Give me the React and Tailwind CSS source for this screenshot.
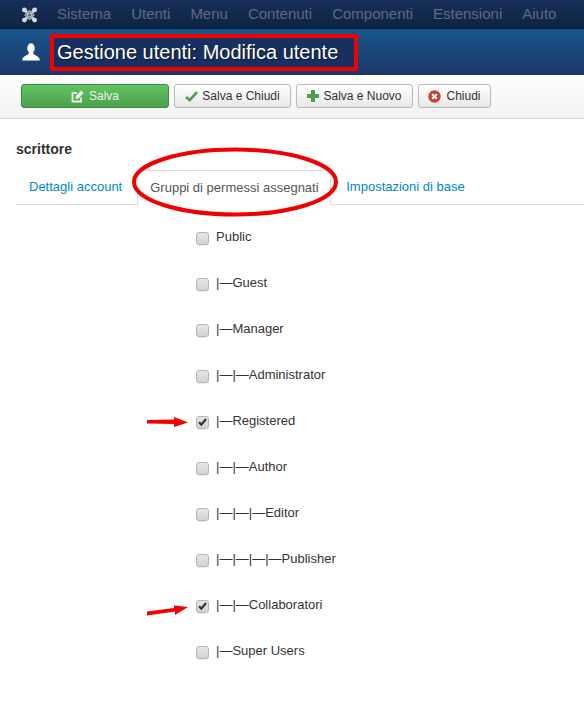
import React from "react";

const font = { fontFamily: '"Liberation Sans", Arial, sans-serif' };
const menu = ["Sistema", "Utenti", "Menu", "Contenuti", "Componenti", "Estensioni", "Aiuto"];
const groups = [
  { label: "Public" },
  { label: "|—Guest" },
  { label: "|—Manager" },
  { label: "|—|—Administrator" },
  { label: "|—Registered", checked: true, arrow: "a" },
  { label: "|—|—Author" },
  { label: "|—|—|—Editor" },
  { label: "|—|—|—|—Publisher" },
  { label: "|—|—Collaboratori", checked: true, arrow: "b" },
  { label: "|—Super Users" },
];

function Joomla() {
  return (
    <svg width="17" height="18" viewBox="0 0 18 18" fill="none" stroke="#d3d8df" strokeLinecap="round">
      <path d="M4 4 L14 14 M14 4 L4 14" strokeWidth="3" />
      <path d="M9 4.5 L13.5 9 L9 13.5 L4.5 9 Z" strokeWidth="1.8" stroke="#9aa5b5" />
      <circle cx="3.6" cy="3.6" r="2.6" fill="#d3d8df" stroke="none" />
      <circle cx="14.4" cy="3.6" r="2.6" fill="#d3d8df" stroke="none" />
      <circle cx="3.6" cy="14.4" r="2.6" fill="#d3d8df" stroke="none" />
      <circle cx="14.4" cy="14.4" r="2.6" fill="#d3d8df" stroke="none" />
      <circle cx="9" cy="9" r="1.6" fill="#5b6a80" stroke="none" />
    </svg>
  );
}

function UserIcon() {
  return (
    <svg width="18" height="18" viewBox="0 0 18 18" fill="#fff">
      <ellipse cx="9" cy="5.3" rx="3.7" ry="5" />
      <path d="M7 9 C7 12.2 2.5 12.6 0.6 15.2 L0.2 17.6 L17.8 17.6 L17.4 15.2 C15.5 12.6 11 12.2 11 9 Z" />
    </svg>
  );
}

function Btn({ icon, label, className }) {
  return (
    <button className={`h-6 flex items-center justify-center gap-1 rounded-[3px] border text-[12px] leading-none ${className}`}>
      {icon}
      <span>{label}</span>
    </button>
  );
}

function Arrow({ kind }) {
  const points = kind === "a"
    ? "0,3 27,2.5 27,0 41,5.5 27,10 27,7 0,6.5"
    : "0,8.5 27,5 27,2.5 41,4 28,12 28,8.5 0,12.5";
  return (
    <svg className={`absolute left-[147px] ${kind === "a" ? "top-[19px]" : "top-[21px]"}`} width="42" height="13" viewBox="0 0 42 13">
      <polygon points={points} fill="#f40000" />
    </svg>
  );
}

export default function App() {
  return (
    <div className="relative min-h-[701px] w-[584px] overflow-hidden bg-white" style={font}>
      <nav className="flex h-[29px] items-center bg-gradient-to-b from-[#17305a] to-[#0f2240] pl-[21px] text-[15px] text-[#5d6b80]">
        <Joomla />
        <div className="ml-[19px] flex gap-[20px]">
          {menu.map((m) => <span key={m}>{m}</span>)}
        </div>
      </nav>

      <header className="flex h-[46px] items-center bg-gradient-to-b from-[#17568c] to-[#1a3867] pl-[22px]">
        <UserIcon />
        <div className="ml-[10px] flex h-[37px] w-[308px] items-center border-4 border-[#f00000] bg-[#17305f] pl-[3px] text-[20px] text-white [text-shadow:1px_1px_1px_rgba(0,0,0,0.6)]">
          Gestione utenti: Modifica utente
        </div>
      </header>

      <div className="flex h-[44px] items-start gap-[5px] border-b border-[#d4d4d4] bg-gradient-to-b from-white to-[#f2f2f2] pl-[21px] pt-[9px]">
        <Btn
          className="w-[148px] border-[#3f8a3f] bg-gradient-to-b from-[#62c462] to-[#4ba04b] text-[#e8f5e8]"
          label="Salva"
          icon={
            <svg width="13" height="13" viewBox="0 0 13 13" fill="none" stroke="#eef7ee" strokeWidth="1.8" className="mr-[1px]">
              <path d="M10 7.5 V11.5 H1.5 V3 H6" />
              <path d="M4.6 9 L5 5.8 L10.2 0.6 L12.6 3 L7.6 8.4 Z" fill="#eef7ee" stroke="none" />
            </svg>
          }
        />
        <Btn
          className="w-[117px] border-[#b9b9b9] bg-gradient-to-b from-white to-[#e8e8e8] text-[#333]"
          label="Salva e Chiudi"
          icon={
            <svg width="13" height="11" viewBox="0 0 13 11" fill="none" stroke="#4d9e4d" strokeWidth="2.6">
              <path d="M1 6 L4.7 9.2 L12 1.2" />
            </svg>
          }
        />
        <Btn
          className="w-[117px] border-[#b9b9b9] bg-gradient-to-b from-white to-[#e8e8e8] text-[#333]"
          label="Salva e Nuovo"
          icon={
            <svg width="12" height="12" viewBox="0 0 12 12" fill="#4d9e4d">
              <path d="M4 0 H8 V4 H12 V8 H8 V12 H4 V8 H0 V4 H4 Z" />
            </svg>
          }
        />
        <Btn
          className="w-[73px] border-[#b9b9b9] bg-gradient-to-b from-white to-[#e8e8e8] text-[#333]"
          label="Chiudi"
          icon={
            <svg width="13" height="13" viewBox="0 0 13 13" className="mr-[1px]">
              <circle cx="6.5" cy="6.5" r="6.2" fill="#c9403c" />
              <path d="M4.2 4.2 L8.8 8.8 M8.8 4.2 L4.2 8.8" stroke="#fff" strokeWidth="2" />
            </svg>
          }
        />
      </div>

      <main className="pl-[16px] pt-[22px]">
        <h2 className="text-[14px] font-bold leading-[17px] text-[#333]">scrittore</h2>

        <div className="mt-[12px] flex h-[35px] items-stretch border-b border-[#ddd] text-[13px]">
          <a className="pl-[13px] pr-[15px] pt-[7px] text-[#0088cc]">Dettagli account</a>
          <a className="relative -mb-px w-[194px] rounded-t-[4px] border border-b-0 border-[#ddd] bg-white pl-[12px] pt-[7px] text-[#555]">
            Gruppi di permessi assegnati
          </a>
          <a className="pl-[15px] pt-[7px] text-[#0088cc]">Impostazioni di base</a>
        </div>

        <ul className="pt-[9px]">
          {groups.map((g) => (
            <li key={g.label} className="relative -ml-[16px] flex h-[46px] items-center pl-[196px] text-[13px] text-[#333]">
              {g.arrow && <Arrow kind={g.arrow} />}
              <span className="relative top-[1px] flex h-[13px] w-[13px] items-center justify-center rounded-[3px] border border-[#b5b5b5] bg-gradient-to-b from-[#e6e6e6] to-[#d2d2d2] shadow-[0_1px_0_#eee]">
                {g.checked && (
                  <svg width="9" height="8" viewBox="0 0 9 8" fill="none" stroke="#333" strokeWidth="2.2">
                    <path d="M1 4.2 L3.3 6.6 L8 1" />
                  </svg>
                )}
              </span>
              <span className="ml-[7px]">{g.label}</span>
            </li>
          ))}
        </ul>
      </main>

      <svg className="pointer-events-none absolute left-[131px] top-[147px]" width="208" height="70" viewBox="0 0 208 70" fill="none">
        <ellipse cx="104" cy="35" rx="101" ry="32.5" stroke="#f00000" strokeWidth="4" />
      </svg>
    </div>
  );
}
